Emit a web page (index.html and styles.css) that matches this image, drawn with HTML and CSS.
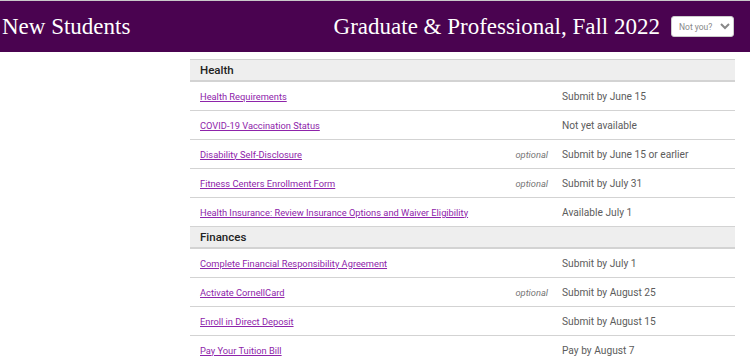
FILE: index.html
```html
<!DOCTYPE html>
<html lang="en">
<head>
  <meta charset="UTF-8" />
  <title>New Students</title>
  <link rel="stylesheet" href="styles.css">
</head>
<body>

  <header class="topbar">
    <h1 class="site-title">New Students</h1>
    <div class="term">
      <span class="term-name">Graduate &amp; Professional, Fall 2022</span>
      <select class="not-you">
        <option>Not you?</option>
      </select>
    </div>
  </header>

  <main class="checklist">
    <table class="tasks">
      <colgroup>
        <col class="col-task">
        <col class="col-opt">
        <col class="col-due">
      </colgroup>
      <tbody>
        <tr class="section"><th colspan="3">Health</th></tr>
        <tr>
          <td class="task"><a href="#">Health Requirements</a></td>
          <td class="opt"></td>
          <td class="due">Submit by June 15</td>
        </tr>
        <tr>
          <td class="task"><a href="#">COVID-19 Vaccination Status</a></td>
          <td class="opt"></td>
          <td class="due">Not yet available</td>
        </tr>
        <tr>
          <td class="task"><a href="#">Disability Self-Disclosure</a></td>
          <td class="opt">optional</td>
          <td class="due">Submit by June 15 or earlier</td>
        </tr>
        <tr>
          <td class="task"><a href="#">Fitness Centers Enrollment Form</a></td>
          <td class="opt">optional</td>
          <td class="due">Submit by July 31</td>
        </tr>
        <tr>
          <td class="task"><a href="#">Health Insurance: Review Insurance Options and Waiver Eligibility</a></td>
          <td class="opt"></td>
          <td class="due">Available July 1</td>
        </tr>
        <tr class="section"><th colspan="3">Finances</th></tr>
        <tr>
          <td class="task"><a href="#">Complete Financial Responsibility Agreement</a></td>
          <td class="opt"></td>
          <td class="due">Submit by July 1</td>
        </tr>
        <tr>
          <td class="task"><a href="#">Activate CornellCard</a></td>
          <td class="opt">optional</td>
          <td class="due">Submit by August 25</td>
        </tr>
        <tr>
          <td class="task"><a href="#">Enroll in Direct Deposit</a></td>
          <td class="opt"></td>
          <td class="due">Submit by August 15</td>
        </tr>
        <tr>
          <td class="task"><a href="#">Pay Your Tuition Bill</a></td>
          <td class="opt"></td>
          <td class="due">Pay by August 7</td>
        </tr>
      </tbody>
    </table>
  </main>

</body>
</html>
```

FILE: styles.css
```css
body {
  margin: 0;
  font-family: Roboto, "Liberation Sans", Arial, sans-serif;
  background: #fff;
}
.topbar {
  display: flex;
  justify-content: space-between;
  align-items: center;
  height: 51px;
  background: #4a0350;
  border-top: 1px solid #c9c9c9;
  color: #fff;
}
.site-title {
  margin: 0 0 0 2px;
  font-family: "Liberation Serif", "Times New Roman", serif;
  font-weight: normal;
  font-size: 23px;
}
.term {
  display: flex;
  align-items: center;
  gap: 11px;
  margin-right: 16px;
}
.term-name {
  font-family: "Liberation Serif", "Times New Roman", serif;
  font-size: 23px;
}
.not-you {
  width: 63px;
  height: 21px;
  font-family: Roboto, sans-serif;
  font-size: 8.5px;
  color: #888;
  background: #fff;
  border: 1px solid #ccc;
  border-radius: 3px;
  padding: 0 0 0 3px;
}
.checklist {
  padding: 7px 15px 0 190px;
}
.tasks {
  width: 545px;
  table-layout: fixed;
  border-collapse: collapse;
  font-size: 9.3px;
}
.col-task { width: 302px; }
.col-opt  { width: 60px; }
.col-due  { width: 183px; }
.tasks td,
.tasks th {
  border-bottom: 1px solid #d3d3d3;
  height: 28px;
  padding: 0 10px;
  vertical-align: middle;
  white-space: nowrap;
}
.section th {
  height: 20px;
  background: #eee;
  border-top: 1px solid #d3d3d3;
  border-bottom: 2px solid #d3d3d3;
  text-align: left;
  font-size: 11.5px;
  font-weight: 500;
  color: #222;
}
.task {
  overflow: visible;
}
.task a {
  color: #8e24aa;
}
.opt {
  text-align: right;
  font-style: italic;
  color: #777;
  padding-right: 4px !important;
}
.due {
  font-size: 10.2px;
  color: #5c5c5c;
}
```
